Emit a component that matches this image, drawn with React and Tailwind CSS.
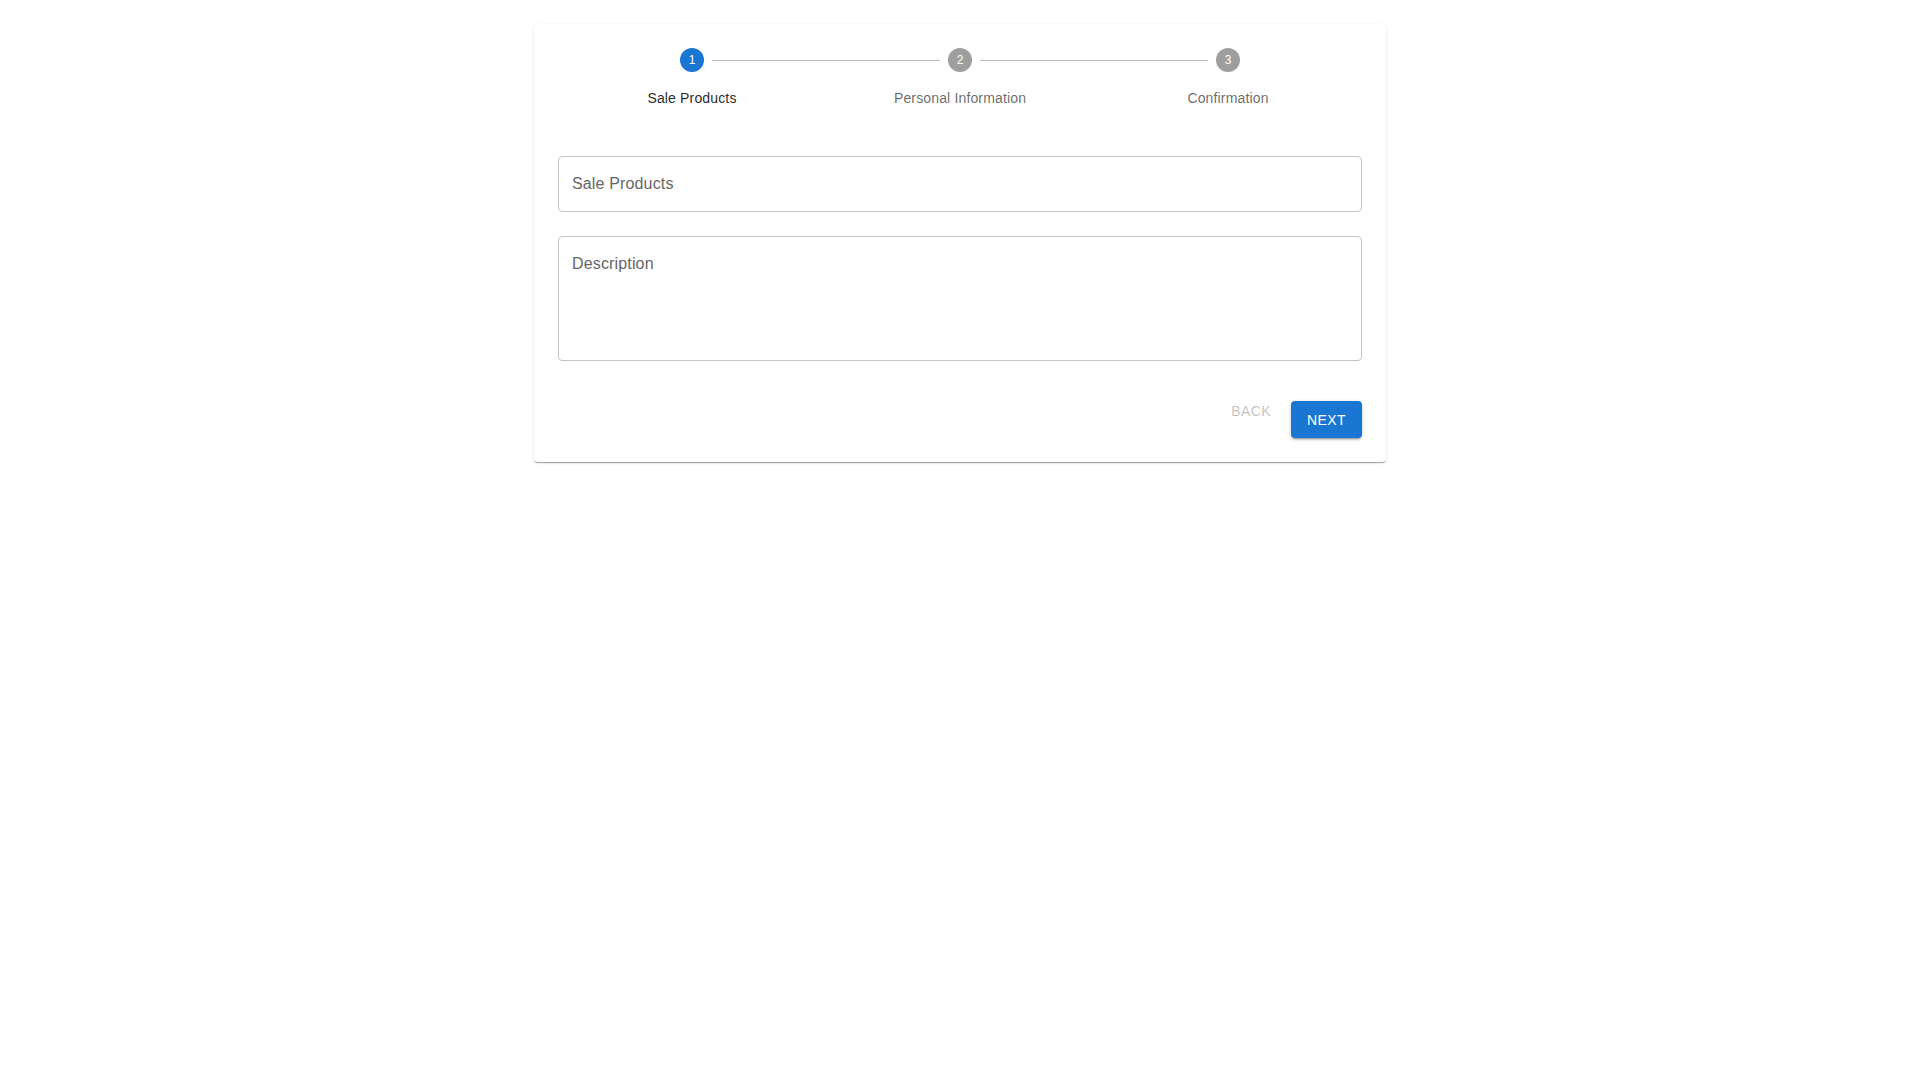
import { useState } from 'react';

const steps = ['Sale Products', 'Personal Information', 'Confirmation'];

function StepItem({ index, label, active, first, last }) {
  return (
    <div className="flex flex-col items-center">
      <div className="flex w-full items-center">
        <div className={`h-px flex-1 mr-2 ${first ? 'bg-transparent' : 'bg-[#bdbdbd]'}`} />
        <div
          className={`flex h-6 w-6 items-center justify-center rounded-full text-xs text-white ${
            active ? 'bg-[#1976d2]' : 'bg-[#9e9e9e]'
          }`}
        >
          {index + 1}
        </div>
        <div className={`h-px flex-1 ml-2 ${last ? 'bg-transparent' : 'bg-[#bdbdbd]'}`} />
      </div>
      <div
        className={`mt-4 text-sm leading-5 tracking-[0.01071em] ${
          active ? 'text-[rgba(0,0,0,0.87)]' : 'text-[rgba(0,0,0,0.6)]'
        }`}
      >
        {label}
      </div>
    </div>
  );
}

export default function App() {
  const [activeStep] = useState(0);
  const [product, setProduct] = useState('');
  const [description, setDescription] = useState('');

  return (
    <div className="min-h-screen bg-white font-['Liberation_Sans',Arial,sans-serif]">
      <div className="mx-auto w-[852px] pt-6">
        {/* Card */}
        <div className="rounded bg-white p-6 shadow-[0px_2px_1px_-1px_rgba(0,0,0,0.2),0px_1px_1px_0px_rgba(0,0,0,0.14),0px_1px_3px_0px_rgba(0,0,0,0.12)]">
          {/* Stepper */}
          <div className="grid grid-cols-3">
            {steps.map((label, i) => (
              <StepItem
                key={label}
                index={i}
                label={label}
                active={i === activeStep}
                first={i === 0}
                last={i === steps.length - 1}
              />
            ))}
          </div>

          {/* Fields */}
          <div className="mt-12">
            <input
              type="text"
              value={product}
              onChange={(e) => setProduct(e.target.value)}
              placeholder="Sale Products"
              className="block h-[56px] w-full rounded border border-[#c4c4c4] px-[13px] text-base leading-[23px] tracking-[0.00938em] text-[rgba(0,0,0,0.87)] outline-none placeholder:text-[#666]"
            />
            <textarea
              rows={4}
              value={description}
              onChange={(e) => setDescription(e.target.value)}
              placeholder="Description"
              className="mt-6 block h-[125px] w-full resize-none rounded border border-[#c4c4c4] px-[13px] py-[15px] text-base leading-[23px] tracking-[0.00938em] text-[rgba(0,0,0,0.87)] outline-none placeholder:text-[#666]"
            />
          </div>

          {/* Actions */}
          <div className="mt-8 flex items-start justify-end gap-2">
            <button
              disabled
              className="h-9 min-w-16 rounded px-2 text-sm font-normal uppercase tracking-[0.02857em] text-[rgba(0,0,0,0.26)]"
            >
              Back
            </button>
            <button className="mt-2 h-[37px] min-w-16 rounded bg-[#1976d2] px-4 text-sm font-normal uppercase tracking-[0.02857em] text-white shadow-[0px_3px_1px_-2px_rgba(0,0,0,0.2),0px_2px_2px_0px_rgba(0,0,0,0.14),0px_1px_5px_0px_rgba(0,0,0,0.12)]">
              Next
            </button>
          </div>
        </div>
      </div>
    </div>
  );
}
